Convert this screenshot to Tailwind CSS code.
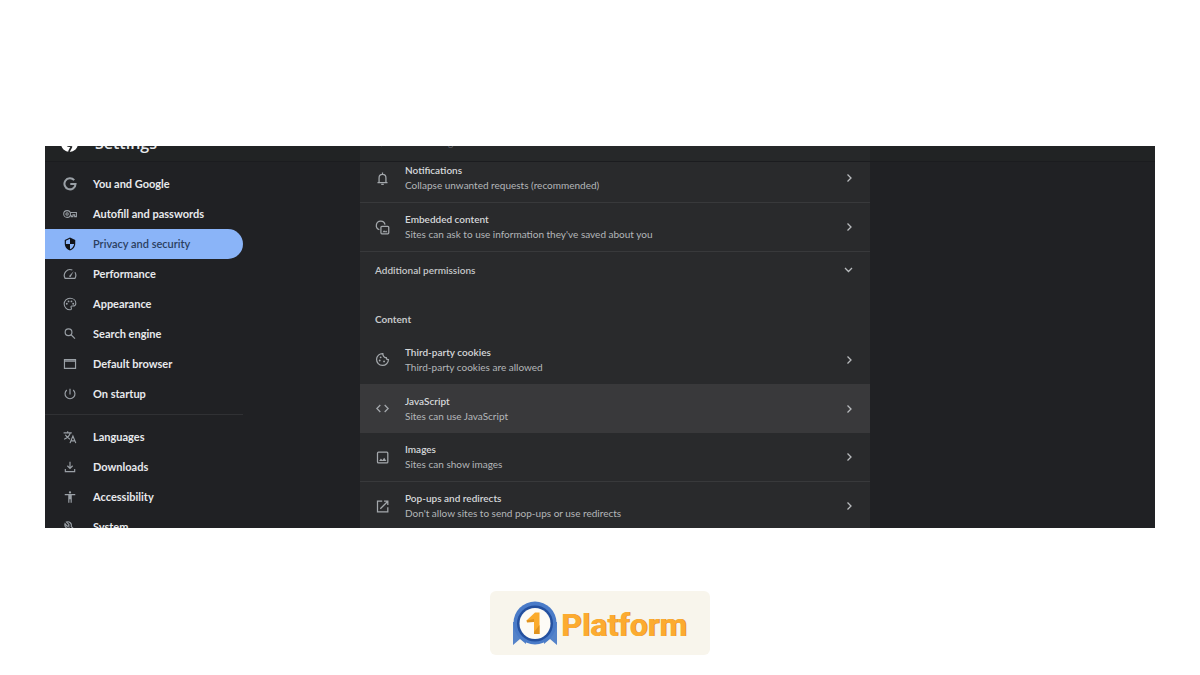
<!DOCTYPE html>
<html lang="en">
<head>
    <meta charset="UTF-8" />
    <meta name="viewport" content="width=device-width, initial-scale=1.0" />
    <title>Settings</title>
    <script src="https://cdn.jsdelivr.net/npm/@tailwindcss/browser@4"></script>
</head>
<body class="bg-white font-['Lato',sans-serif]">
<div class="px-[45px] pt-[146px]">
    <div class="h-[382px] overflow-hidden bg-[#202124] text-[#e8eaed]">

        <!-- Toolbar, scrolled partly out of view -->
        <header class="flex h-4 items-end overflow-hidden border-b border-[#1b1c1f] bg-[#212324]">
            <div class="flex w-[198px] items-center gap-[17px] pb-[6px] pl-4">
                <svg class="size-[17px]" viewBox="0 0 24 24" fill="#fff">
                    <path fill-rule="evenodd" d="M12 0a12 12 0 1 0 0 24 12 12 0 0 0 0-24zm0 7a5 5 0 1 1 0 10 5 5 0 0 1 0-10z" />
                    <path d="M11 24l4-8" stroke="#212324" stroke-width="2.5" />
                </svg>
                <h1 class="font-['Open_Sans',sans-serif] text-base/6 font-semibold">Settings</h1>
            </div>
            <label class="ml-[117px] flex w-[510px] items-center gap-2 bg-[#262829] px-3 pb-[9px]">
                <svg class="size-3" viewBox="0 0 24 24" fill="none" stroke="#9aa0a6" stroke-width="2"><circle cx="9.500" cy="9.500" r="6" /><path d="M14 14l6 6" /></svg>
                <input type="search" placeholder="Search settings" aria-label="Search settings" class="w-full bg-transparent text-[10px]/5 text-[#9aa0a6] outline-none" />
            </label>
        </header>

        <div class="flex">
            <!-- Sidebar -->
            <nav class="w-[198px] shrink-0 pt-[7px] text-[11px]/4 font-bold">
                <a href="#" class="flex h-[30px] items-center gap-4 pl-[18px]">
                    <svg class="size-[14px]" viewBox="0 0 24 24" fill="none" stroke="#9aa0a6" stroke-width="3.500"><path d="M19.200 5.500A9.500 9.500 0 1 0 21.500 12H12.500" /></svg>
                    You and Google
                </a>
                <a href="#" class="flex h-[30px] items-center gap-4 pl-[18px]">
                    <svg class="size-[14px]" viewBox="0 0 24 24" fill="none" stroke="#9aa0a6" stroke-width="1.800"><circle cx="7" cy="12" r="5.800" /><circle cx="7" cy="12" r="2" /><path d="M12.500 9.500H23v7h-3v-3h-3v3h-3v-2h-2" /></svg>
                    Autofill and passwords
                </a>
                <a href="#" class="flex h-[30px] items-center gap-4 rounded-r-full bg-[#8ab4f8] pl-[18px] font-semibold text-[#2b3f5f]">
                    <svg class="size-[14px]" viewBox="0 0 24 24" fill="#111318"><path d="M12 1 3 5v6c0 5.550 3.840 10.740 9 12 5.160-1.260 9-6.450 9-12V5l-9-4zm0 10.990h7c-.530 4.120-3.280 7.790-7 8.940V12H5V6.300l7-3.110v8.800z" /></svg>
                    Privacy and security
                </a>
                <a href="#" class="flex h-[30px] items-center gap-4 pl-[18px]">
                    <svg class="size-[14px]" viewBox="0 0 24 24" fill="none" stroke="#9aa0a6" stroke-width="2"><path d="M16 5.200A10 10 0 0 0 3.600 19.500h16.800A10 10 0 0 0 20.500 9" /><path d="M10.500 15.500 18.500 7l-5.500 10a1.800 1.800 0 0 1-2.500-1.500z" fill="#9aa0a6" stroke="none" /></svg>
                    Performance
                </a>
                <a href="#" class="flex h-[30px] items-center gap-4 pl-[18px]">
                    <svg class="size-[14px]" viewBox="0 0 24 24" fill="none" stroke="#9aa0a6" stroke-width="1.800"><path d="M12 2a10 10 0 1 0 0 20c1.500 0 2.500-1.200 2.500-2.500 0-.700-.300-1.200-.600-1.700-.700-1.100 0-2.300 1.300-2.300H17c3 0 5-2 5-5C22 5.500 17.500 2 12 2z" /><g fill="#9aa0a6" stroke="none"><circle cx="6.500" cy="11.500" r="1.600" /><circle cx="9.500" cy="7.500" r="1.600" /><circle cx="14.500" cy="7.500" r="1.600" /><circle cx="17.500" cy="11.500" r="1.600" /></g></svg>
                    Appearance
                </a>
                <a href="#" class="flex h-[30px] items-center gap-4 pl-[18px]">
                    <svg class="size-[14px]" viewBox="0 0 24 24" fill="none" stroke="#9aa0a6" stroke-width="2"><circle cx="9.500" cy="9" r="5.800" /><path d="M13.800 13.300l6.700 6.700" /></svg>
                    Search engine
                </a>
                <a href="#" class="flex h-[30px] items-center gap-4 pl-[18px]">
                    <svg class="size-[14px]" viewBox="0 0 24 24" fill="none" stroke="#9aa0a6" stroke-width="2"><path d="M2.500 4.500h19v15h-19zM2.500 7h19" /></svg>
                    Default browser
                </a>
                <a href="#" class="flex h-[30px] items-center gap-4 pl-[18px]">
                    <svg class="size-[14px]" viewBox="0 0 24 24" fill="none" stroke="#9aa0a6" stroke-width="2"><path d="M12 3v10M17.500 5.200a8.500 8.500 0 1 1-11 0" /></svg>
                    On startup
                </a>
                <hr class="mt-[5px] mb-[7px] border-[#303134]" />
                <a href="#" class="flex h-[30px] items-center gap-4 pl-[18px]">
                    <svg class="size-[14px]" viewBox="0 0 24 24" fill="none" stroke="#9aa0a6" stroke-width="2"><path d="M1 5h14M8 2v3M12.500 5c-1 4-5 8.500-10.500 11M4 8c2 4 5 6 8 8M12 22.500l5-12 5 12M13.500 18.500h7" /></svg>
                    Languages
                </a>
                <a href="#" class="flex h-[30px] items-center gap-4 pl-[18px]">
                    <svg class="size-[14px]" viewBox="0 0 24 24" fill="none" stroke="#9aa0a6" stroke-width="2"><path d="M12 3v11M7.500 9.800l4.500 4.500 4.500-4.500M4 15.500V20h16v-4.500" /></svg>
                    Downloads
                </a>
                <a href="#" class="flex h-[30px] items-center gap-4 pl-[18px]">
                    <svg class="size-[14px]" viewBox="0 0 24 24" fill="#9aa0a6"><path d="M12 2a2 2 0 1 1 0 4 2 2 0 0 1 0-4zm9 7h-6v13h-2v-6h-2v6H9V9H3V7h18v2z" /></svg>
                    Accessibility
                </a>
                <a href="#" class="flex h-[30px] items-center gap-4 pl-[18px]">
                    <svg class="size-[14px]" viewBox="0 0 24 24" fill="none" stroke="#9aa0a6" stroke-width="2"><path d="M6 3.500l4 4v3H7l-3.500-4A6 6 0 0 0 11 14l7 7 3-3-7-7A6 6 0 0 0 6 3.500z" /></svg>
                    System
                </a>
            </nav>

            <!-- Site settings -->
            <main class="ml-[117px] w-[510px] overflow-hidden bg-[#292a2c] text-[10px]/[15px]">
                <a href="#" class="-mt-2 flex h-[49px] items-center gap-[15px] border-b border-[#38393b] px-[15px]">
                    <svg class="size-[15px]" viewBox="0 0 24 24" fill="none" stroke="#a4a8ac" stroke-width="2"><path d="M4 18.500h16M6.500 18.500V11a5.500 5.500 0 0 1 11 0v7.500M12 2.500V5" /><path d="M10 21.300h4" /></svg>
                    <div class="flex-1">
                        <div class="font-semibold text-[#d6d8da]">Notifications</div>
                        <div class="text-[#b4b7ba]">Collapse unwanted requests (recommended)</div>
                    </div>
                    <svg class="size-3" viewBox="0 0 12 12" fill="none" stroke="#b8bbbe" stroke-width="1.300"><path d="M4.500 2.500 8 6 4.500 9.500" /></svg>
                </a>
                <a href="#" class="flex h-[49px] items-center gap-[15px] border-b border-[#38393b] px-[15px]">
                    <svg class="size-[15px]" viewBox="0 0 24 24" fill="none" stroke="#a4a8ac" stroke-width="2"><path d="M7 15.500A7 7 0 1 1 16 7.500" /><rect x="9.500" y="10" width="12.500" height="12" rx="1.500" /><path d="M12 19.500l2.500-3 1.800 2 1.500-1.700 2.200 2.700z" fill="#a4a8ac" stroke="none" /></svg>
                    <div class="flex-1">
                        <div class="font-semibold text-[#d6d8da]">Embedded content</div>
                        <div class="text-[#b4b7ba]">Sites can ask to use information they've saved about you</div>
                    </div>
                    <svg class="size-3" viewBox="0 0 12 12" fill="none" stroke="#b8bbbe" stroke-width="1.300"><path d="M4.500 2.500 8 6 4.500 9.500" /></svg>
                </a>
                <button type="button" class="flex h-9 w-full items-center justify-between px-[15px] font-semibold text-[#c6c8ca]">
                    Additional permissions
                    <svg class="size-3" viewBox="0 0 12 12" fill="none" stroke="#b8bbbe" stroke-width="1.300"><path d="M2 4 5.500 7.500 9 4" /></svg>
                </button>
                <h2 class="mt-[15px] flex h-8 items-center px-[15px] font-bold text-[#c6c8ca]">Content</h2>
                <a href="#" class="flex h-[49px] items-center gap-[15px] px-[15px]">
                    <svg class="size-[15px]" viewBox="0 0 24 24" fill="none" stroke="#a4a8ac" stroke-width="2"><path d="M12.500 2.500A9.500 9.500 0 1 0 21.500 12c-2 0-3.500-1-3.500-3-3 .500-5.500-2.500-5.500-6.500z" /><g fill="#a4a8ac" stroke="none"><circle cx="9" cy="8.500" r="1.500" /><circle cx="7.500" cy="13.500" r="1.500" /><circle cx="14.500" cy="15" r="1.500" /></g></svg>
                    <div class="flex-1">
                        <div class="font-semibold text-[#d6d8da]">Third-party cookies</div>
                        <div class="text-[#b4b7ba]">Third-party cookies are allowed</div>
                    </div>
                    <svg class="size-3" viewBox="0 0 12 12" fill="none" stroke="#b8bbbe" stroke-width="1.300"><path d="M4.500 2.500 8 6 4.500 9.500" /></svg>
                </a>
                <a href="#" class="flex h-[49px] items-center gap-[15px] bg-[#39393b] px-[15px]">
                    <svg class="size-[15px]" viewBox="0 0 24 24" fill="none" stroke="#a4a8ac" stroke-width="2"><path d="M8.500 6.500 3 12l5.500 5.500M15.500 6.500 21 12l-5.500 5.500" /></svg>
                    <div class="flex-1">
                        <div class="font-semibold text-[#d6d8da]">JavaScript</div>
                        <div class="text-[#b4b7ba]">Sites can use JavaScript</div>
                    </div>
                    <svg class="size-3" viewBox="0 0 12 12" fill="none" stroke="#b8bbbe" stroke-width="1.300"><path d="M4.500 2.500 8 6 4.500 9.500" /></svg>
                </a>
                <a href="#" class="flex h-[49px] items-center gap-[15px] border-b border-[#38393b] px-[15px]">
                    <svg class="size-[15px]" viewBox="0 0 24 24" fill="none" stroke="#a4a8ac" stroke-width="2"><rect x="4" y="3.500" width="16.500" height="17" rx="1.500" /><path d="M6.500 17.500l3-4 2.200 2.700 3-3.700 3.500 5z" fill="#a4a8ac" stroke="none" /></svg>
                    <div class="flex-1">
                        <div class="font-semibold text-[#d6d8da]">Images</div>
                        <div class="text-[#b4b7ba]">Sites can show images</div>
                    </div>
                    <svg class="size-3" viewBox="0 0 12 12" fill="none" stroke="#b8bbbe" stroke-width="1.300"><path d="M4.500 2.500 8 6 4.500 9.500" /></svg>
                </a>
                <a href="#" class="flex h-12 items-center gap-[15px] px-[15px]">
                    <svg class="size-[15px]" viewBox="0 0 24 24" fill="none" stroke="#a4a8ac" stroke-width="2"><path d="M11.500 3.500H4v17h16.500V13M14.500 3.500h6v6M20.500 3.500 8.500 15.500" /></svg>
                    <div class="flex-1">
                        <div class="font-semibold text-[#d6d8da]">Pop-ups and redirects</div>
                        <div class="text-[#b4b7ba]">Don't allow sites to send pop-ups or use redirects</div>
                    </div>
                    <svg class="size-3" viewBox="0 0 12 12" fill="none" stroke="#b8bbbe" stroke-width="1.300"><path d="M4.500 2.500 8 6 4.500 9.500" /></svg>
                </a>
            </main>
        </div>
    </div>
</div>

<!-- Brand badge -->
<footer class="flex justify-center pt-[63px]">
    <div class="flex h-16 items-center gap-1 rounded-md bg-[#f8f5ec] px-[23px]">
        <svg class="size-11" viewBox="0 0 44 44">
            <path d="M0 21v23l7-6 6 5V21zM44 21v23l-7-6-6 5V21z" fill="#5583c9" />
            <circle cx="22" cy="22" r="21.500" fill="#4a7bc8" />
            <circle cx="22" cy="22.500" r="18" fill="#24509f" />
            <circle cx="22" cy="22.500" r="15.500" fill="#fdfbf6" />
            <path d="M13.500 19.500 22 11.500h4.500V33H21V20h-7z" fill="#fbab2c" />
            <path d="M13.500 19.500 21 18v3l-7 .500zM21 31l5.500-7v9H21z" fill="#e0931f" />
        </svg>
        <span class="pt-[3px] font-['Roboto',sans-serif] text-[32px]/9 font-bold text-[#fcab30] [text-shadow:1px_0_0_#dd9228]">Platform</span>
    </div>
</footer>
</body>
</html>
